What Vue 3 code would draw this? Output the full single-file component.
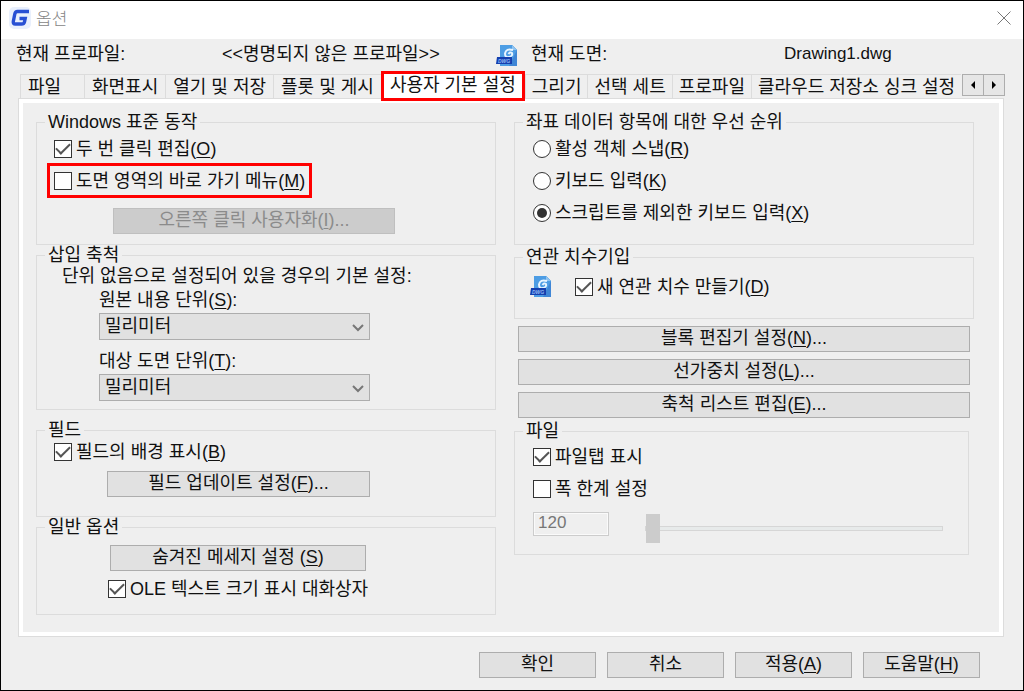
<script setup>
import { ref } from 'vue'

const tabs = [
  '파일',
  '화면표시',
  '열기 및 저장',
  '플롯 및 게시',
  '사용자 기본 설정',
  '그리기',
  '선택 세트',
  '프로파일',
  '클라우드 저장소 싱크 설정',
]
const activeTab = ref(4)

const doubleClickEdit = ref(true)
const shortcutMenu = ref(false)
const sourceUnit = ref('밀리미터')
const targetUnit = ref('밀리미터')
const fieldBackground = ref(true)
const oleDialog = ref(true)

const priorities = [
  { id: 'osnap', text: '활성 객체 스냅', key: 'R' },
  { id: 'keyboard', text: '키보드 입력', key: 'K' },
  { id: 'script', text: '스크립트를 제외한 키보드 입력', key: 'X' },
]
const priority = ref('script')
const associative = ref(true)
const settings = [
  { text: '블록 편집기 설정', key: 'N' },
  { text: '선가중치 설정', key: 'L' },
  { text: '축척 리스트 편집', key: 'E' },
]
const fileTabs = ref(true)
const limitWidth = ref(false)
</script>

<template>
  <main class="dialog">
    <header class="titlebar">
      <svg class="logo" viewBox="0 0 22 22" aria-hidden="true">
        <rect x="0" y="0" width="22" height="22" rx="5" fill="#e9f0fd" />
        <path d="M20 4.500H8.500Q6.300 4.500 5.800 7L4.300 14.500Q3.900 17 6.300 17H12.500Q15 17 15.500 14.800L16.200 11.500H10.500" fill="none" stroke="#2850d4" stroke-width="3.400" />
      </svg>
      <h1>옵션</h1>
      <button class="close" type="button" aria-label="닫기">
        <svg viewBox="0 0 14 14"><path d="M0.500 0.500L13.500 13.500M13.500 0.500L0.500 13.500" stroke="#777" stroke-width="1" /></svg>
      </button>
    </header>

    <div class="info">
      <span class="profile-label">현재 프로파일:</span>
      <span class="profile">&lt;&lt;명명되지 않은 프로파일&gt;&gt;</span>
      <svg class="dwg" viewBox="0 0 22 22" aria-hidden="true">
        <path d="M4 0H16L21 5V21H4Z" fill="#3f86d6" />
        <path d="M4 0H16L21 5L13 21H4Z" fill="#4d9de4" />
        <path d="M16 0V5H21Z" fill="#8fc3f0" />
        <path d="M17 5Q10 3 9 8.500Q9 13 13 12Q17 11 16 8Q14 6.500 12.500 9" fill="none" stroke="#e8f5ff" stroke-width="2" />
        <path d="M1 12H16V19H0Z" fill="#143fae" />
        <text x="2" y="18" font-size="5" font-weight="bold" font-style="italic" fill="#8fb8f5">DWG</text>
      </svg>
      <span class="drawing-label">현재 도면:</span>
      <span class="drawing">Drawing1.dwg</span>
    </div>

    <nav class="tabbar">
      <div class="tabs" role="tablist">
        <button
          v-for="(tab, i) in tabs"
          :key="tab"
          type="button"
          role="tab"
          class="tab"
          :class="{ active: i === activeTab }"
          :aria-selected="i === activeTab"
          @click="activeTab = i"
        >{{ tab }}</button>
      </div>
      <div class="scroller">
        <button type="button" aria-label="이전 탭"><svg viewBox="0 0 8 8"><path d="M6 0V8L2 4Z" /></svg></button>
        <button type="button" aria-label="다음 탭"><svg viewBox="0 0 8 8"><path d="M2 0V8L6 4Z" /></svg></button>
      </div>
    </nav>

    <section class="panel" role="tabpanel">
      <div class="column">
        <fieldset class="behavior">
          <legend>Windows 표준 동작</legend>
          <label class="option first"><input v-model="doubleClickEdit" type="checkbox" /><span>두 번 클릭 편집(<u>O</u>)</span></label>
          <label class="option highlighted"><input v-model="shortcutMenu" type="checkbox" /><span>도면 영역의 바로 가기 메뉴(<u>M</u>)</span></label>
          <button class="push" type="button" disabled>오른쪽 클릭 사용자화(<u>I</u>)...</button>
        </fieldset>

        <fieldset class="scale">
          <legend>삽입 축척</legend>
          <p>단위 없음으로 설정되어 있을 경우의 기본 설정:</p>
          <div class="field">
            <label for="source-unit">원본 내용 단위(<u>S</u>):</label>
            <div class="combo">
              <select id="source-unit" v-model="sourceUnit"><option>밀리미터</option></select>
              <svg viewBox="0 0 12 8" aria-hidden="true"><path d="M1 1L6 6L11 1" /></svg>
            </div>
          </div>
          <div class="field">
            <label for="target-unit">대상 도면 단위(<u>T</u>):</label>
            <div class="combo">
              <select id="target-unit" v-model="targetUnit"><option>밀리미터</option></select>
              <svg viewBox="0 0 12 8" aria-hidden="true"><path d="M1 1L6 6L11 1" /></svg>
            </div>
          </div>
        </fieldset>

        <fieldset class="fields">
          <legend>필드</legend>
          <label class="option"><input v-model="fieldBackground" type="checkbox" /><span>필드의 배경 표시(<u>B</u>)</span></label>
          <button class="push" type="button">필드 업데이트 설정(<u>F</u>)...</button>
        </fieldset>

        <fieldset class="general">
          <legend>일반 옵션</legend>
          <button class="push" type="button">숨겨진 메세지 설정 (<u>S</u>)</button>
          <label class="option"><input v-model="oleDialog" type="checkbox" /><span>OLE 텍스트 크기 표시 대화상자</span></label>
        </fieldset>
      </div>

      <div class="column">
        <fieldset class="priority">
          <legend>좌표 데이터 항목에 대한 우선 순위</legend>
          <label v-for="p in priorities" :key="p.id" class="option">
            <input v-model="priority" type="radio" name="priority" :value="p.id" /><span>{{ p.text }}(<u>{{ p.key }}</u>)</span>
          </label>
        </fieldset>

        <fieldset class="dimension">
          <legend>연관 치수기입</legend>
          <div class="dimension-row">
            <svg class="dwg" viewBox="0 0 22 22" aria-hidden="true">
              <path d="M4 0H16L21 5V21H4Z" fill="#3f86d6" />
              <path d="M4 0H16L21 5L13 21H4Z" fill="#4d9de4" />
              <path d="M16 0V5H21Z" fill="#8fc3f0" />
              <path d="M17 5Q10 3 9 8.500Q9 13 13 12Q17 11 16 8Q14 6.500 12.500 9" fill="none" stroke="#e8f5ff" stroke-width="2" />
              <path d="M1 12H16V19H0Z" fill="#143fae" />
              <text x="2" y="18" font-size="5" font-weight="bold" font-style="italic" fill="#8fb8f5">DWG</text>
            </svg>
            <label class="option"><input v-model="associative" type="checkbox" /><span>새 연관 치수 만들기(<u>D</u>)</span></label>
          </div>
        </fieldset>

        <div class="settings">
          <button v-for="s in settings" :key="s.key" class="push" type="button">{{ s.text }}(<u>{{ s.key }}</u>)...</button>
        </div>

        <fieldset class="files">
          <legend>파일</legend>
          <label class="option"><input v-model="fileTabs" type="checkbox" /><span>파일탭 표시</span></label>
          <label class="option"><input v-model="limitWidth" type="checkbox" /><span>폭 한계 설정</span></label>
          <div class="width-row">
            <input class="width-value" type="text" value="120" aria-label="폭" :disabled="!limitWidth" />
            <input class="slider" type="range" min="120" max="400" value="120" aria-label="폭 한계" :disabled="!limitWidth" />
          </div>
        </fieldset>
      </div>
    </section>

    <footer class="actions">
      <button class="push" type="button">확인</button>
      <button class="push" type="button">취소</button>
      <button class="push" type="button">적용(<u>A</u>)</button>
      <button class="push" type="button">도움말(<u>H</u>)</button>
    </footer>
  </main>
</template>

<style>
body {
  margin: 0;
  background: #efefef;
}
</style>

<style scoped>
* {
  box-sizing: border-box;
}
.dialog {
  min-height: 100vh;
  border: 1px solid #000;
  background: #efefef;
  color: #111;
  font-family: "Liberation Sans", "Noto Sans CJK KR", sans-serif;
  font-size: 18px;
  line-height: 20px;
  white-space: nowrap;
}
button,
input,
select {
  margin: 0;
  padding: 0;
  color: inherit;
  font: inherit;
}
u {
  text-decoration-thickness: 1px;
  text-underline-offset: 2px;
}
.titlebar {
  display: flex;
  align-items: center;
  height: 38px;
  padding: 0 12px 4px 8px;
  background: #fff;
}
.logo {
  width: 22px;
  height: 22px;
}
h1 {
  margin: 0 auto 0 5px;
  padding-top: 3px;
  color: #858585;
  font-size: 17px;
  font-weight: 300;
}
.close {
  width: 14px;
  height: 14px;
  border: 0;
  background: none;
}
.close svg {
  display: block;
}
.info {
  display: grid;
  grid-template-columns: 206fr 274fr 35fr 253fr 239fr;
  align-items: center;
  height: 30px;
  padding-left: 15px;
}
.dwg {
  width: 22px;
  height: 22px;
}
.info .dwg {
  margin-top: 3px;
}
.drawing {
  font-size: 17px;
}
.tabbar {
  display: flex;
  align-items: flex-start;
  height: 24px;
  margin: 5px 18px 0 19px;
}
.tabs {
  display: flex;
  flex: 1;
  min-width: 0;
}
.tab {
  flex: none;
  height: 24px;
  padding: 0 7px;
  border: 0 solid #dcdcdc;
  border-width: 1px 0 0 1px;
  background: #efefef;
}
.tab.active ~ .tab {
  padding: 0 6px;
}
.tab:first-child {
  min-width: 64px;
  text-align: left;
}
.tab.active ~ .tab:last-child {
  flex: 0 1 auto;
  min-width: 0;
  overflow: hidden;
}
.tab.active {
  z-index: 1;
  height: 30px;
  margin-top: -3px;
  padding: 0 6px 2px;
  border: 3px solid #f00;
  background: #fff;
}
.scroller {
  display: flex;
}
.scroller button {
  display: grid;
  place-items: center;
  width: 22px;
  height: 22px;
  border: 1px solid #adadad;
  background: #e6e6e6;
}
.scroller button + button {
  margin-left: -1px;
}
.scroller svg {
  width: 8px;
  height: 8px;
}
.panel {
  display: grid;
  grid-template-columns: 1fr 1fr;
  gap: 18px;
  margin: 0 19px 0 17px;
  padding: 13px 29px 21px 17px;
  border: 1px solid #dcdcdc;
  box-shadow: inset 0 0 0 4px #fff;
}
.column {
  display: flex;
  flex-direction: column;
  min-width: 0;
}
fieldset {
  min-width: 0;
  margin: 0;
  padding: 0;
  border: 1px solid #dcdcdc;
}
legend {
  height: 20px;
  margin-left: 8px;
  padding: 0 3px;
}
.option {
  display: flex;
  align-items: center;
  gap: 4px;
  width: fit-content;
  height: 32px;
  margin-left: 17px;
}
.option input {
  flex: none;
  width: 18px;
  height: 18px;
  appearance: none;
  border: 1px solid #333;
  background: #fff;
}
.option input[type="checkbox"] {
  display: grid;
  place-items: center;
}
.option input[type="checkbox"]:checked::before {
  width: 12px;
  height: 6px;
  margin-top: -4px;
  border: solid #555;
  border-width: 0 0 2px 2px;
  content: "";
  transform: rotate(-45deg);
}
.option input[type="radio"] {
  display: grid;
  place-items: center;
  border-radius: 50%;
}
.option input[type="radio"]:checked::before {
  width: 10px;
  height: 10px;
  border-radius: 50%;
  background: #333;
  content: "";
}
.push {
  display: block;
  height: 26px;
  padding-bottom: 2px;
  border: 1px solid #adadad;
  background: #e1e1e1;
}
.push:disabled {
  border-color: #bfbfbf;
  background: #ccc;
  color: #8b8b8b;
}
.behavior {
  padding-bottom: 10px;
}
.option.first {
  height: 29px;
  margin-top: 2px;
}
.option.highlighted {
  height: 35px;
  margin-left: 10px;
  padding: 0 4px;
  border: 3px solid #f00;
}
.behavior .push {
  width: 282px;
  margin: 10px 0 0 76px;
}
.scale {
  padding-bottom: 8px;
}
.scale p {
  margin: 0 0 0 25px;
  line-height: 22px;
}
.field {
  width: 271px;
  margin-left: 62px;
}
.field + .field {
  margin-top: 8px;
}
.field label {
  display: block;
  line-height: 26px;
}
.combo {
  position: relative;
}
.combo select {
  display: block;
  width: 100%;
  height: 27px;
  padding: 0 24px 2px 5px;
  appearance: none;
  border: 1px solid #adadad;
  border-radius: 0;
  background: #e1e1e1;
}
.combo svg {
  position: absolute;
  top: 11px;
  right: 6px;
  width: 12px;
  height: 8px;
  fill: none;
  stroke: #777;
  stroke-width: 2;
  pointer-events: none;
}
.fields {
  margin-top: 10px;
  padding-bottom: 19px;
}
.fields .option,
.general .option {
  height: 24px;
}
.fields .push {
  width: 263px;
  margin: 7px 0 0 70px;
}
.general {
  padding-bottom: 13px;
}
.general .push {
  width: 256px;
  margin: 8px 0 6px 73px;
}
.general .option {
  margin-left: 71px;
}
.priority {
  padding: 1px 0 15px;
}
.priority .option,
.files .option {
  margin-left: 18px;
}
.dimension {
  margin-top: 2px;
  padding-bottom: 11px;
}
.dimension-row {
  display: flex;
  align-items: center;
  height: 40px;
  padding-left: 15px;
}
.dimension-row .option {
  margin-left: 23px;
}
.settings {
  display: grid;
  gap: 7px;
  margin: 7px 4px 0 4px;
}
.files {
  margin: 3px 5px 0 0;
  padding-bottom: 11px;
}
.width-row {
  display: flex;
  align-items: flex-start;
  gap: 36px;
  margin: 7px 25px 0 18px;
}
.width-value {
  width: 76px;
  height: 24px;
  padding: 0 4px 2px;
  border: 1px solid #ccc;
  box-shadow: inset 0 0 0 1px #fafafa;
  background: #efefef;
  color: #777;
  font-size: 17px;
}
.slider {
  flex: 1;
  min-width: 0;
  height: 29px;
  margin-top: 2px;
  appearance: none;
  background: none;
}
.slider::-webkit-slider-runnable-track {
  height: 5px;
  border: 1px solid #d6d6d6;
  background: #e7eaea;
}
.slider::-webkit-slider-thumb {
  width: 14px;
  height: 29px;
  margin-top: -13px;
  appearance: none;
  background: #ccc;
}
.actions {
  display: flex;
  justify-content: flex-end;
  gap: 11px;
  padding: 15px 43px 12px;
}
.actions .push {
  width: 117px;
}
</style>
